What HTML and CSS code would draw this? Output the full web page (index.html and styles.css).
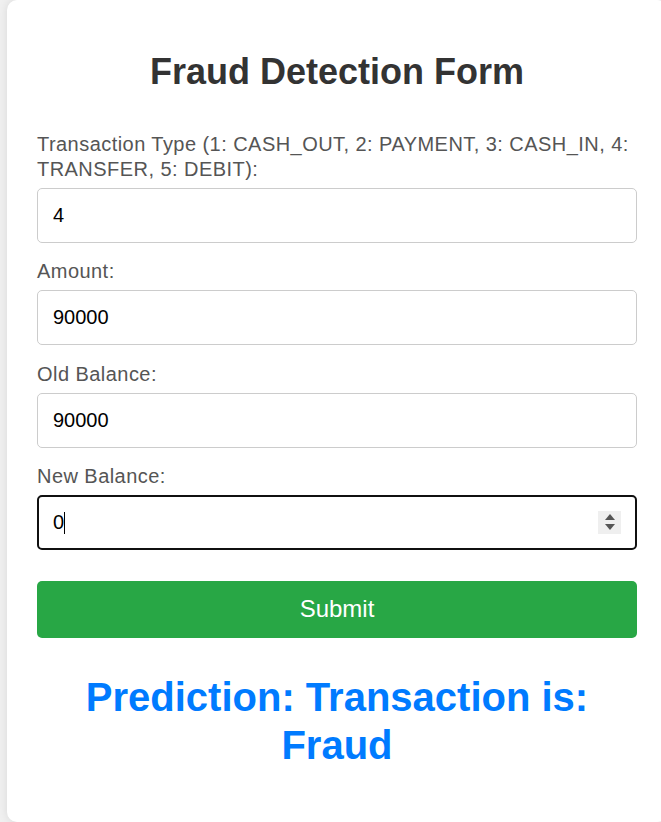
FILE: index.html
```html
<!DOCTYPE html>
<html lang="en">
<head>
<meta charset="utf-8">
<title>Fraud Detection Form</title>
<link rel="stylesheet" href="styles.css">
</head>
<body>
<div class="card">
  <h2 class="title">Fraud Detection Form</h2>
  <form class="form">
    <label class="label" for="type">Transaction Type (1: CASH_OUT, 2: PAYMENT, 3: CASH_IN, 4: TRANSFER, 5: DEBIT):</label>
    <input class="field" id="type" type="text" value="4">
    <label class="label" for="amount">Amount:</label>
    <input class="field" id="amount" type="text" value="90000">
    <label class="label" for="old">Old Balance:</label>
    <input class="field" id="old" type="text" value="90000">
    <label class="label" for="new">New Balance:</label>
    <div class="field-wrap">
      <input class="field focused" id="new" type="text" value="0">
      <span class="caret"></span>
      <span class="spinner">
        <svg width="12" height="18" viewBox="0 0 12 18"><path d="M6 1 L11 7 L1 7 Z" fill="#555"/><path d="M1 11 L11 11 L6 17 Z" fill="#555"/></svg>
      </span>
    </div>
    <button class="submit" type="button">Submit</button>
  </form>
  <h2 class="prediction">Prediction: Transaction is: Fraud</h2>
</div>
</body>
</html>
```

FILE: styles.css
```css
html, body {
  margin: 0;
  padding: 0;
}
body {
  background: #f0f0f0;
  font-family: "Liberation Sans", Arial, sans-serif;
  overflow: hidden;
  height: 822px;
}
.card {
  background: #fff;
  margin-left: 7px;
  width: 600px;
  height: 741px;
  padding: 51px 30px 30px;
  border-radius: 10px;
  box-shadow: 0 0 10px rgba(0, 0, 0, 0.1);
}
.title {
  margin: 0 0 40px;
  text-align: center;
  color: #333;
  font-size: 36px;
  line-height: 41px;
  font-weight: bold;
}
.form {
  display: flex;
  flex-direction: column;
}
.label {
  color: #555;
  font-size: 20px;
  line-height: 25px;
  letter-spacing: 0.45px;
  margin-bottom: 6px;
}
.field {
  box-sizing: border-box;
  width: 600px;
  height: 55px;
  padding: 0 15px;
  border: 1px solid #ccc;
  border-radius: 5px;
  font-family: "Liberation Sans", Arial, sans-serif;
  font-size: 20px;
  color: #000;
  margin: 0 0 16.3px;
  background: #fff;
}
.field-wrap {
  position: relative;
  width: 600px;
  height: 55px;
  margin-bottom: 31px;
}
.field-wrap .field {
  margin: 0;
}
.focused {
  border: 2px solid #101010;
  padding-left: 14px;
  outline: none;
}
.caret {
  position: absolute;
  left: 27px;
  top: 17px;
  width: 1px;
  height: 22px;
  background: #000;
}
.spinner {
  position: absolute;
  left: 561px;
  top: 16px;
  width: 23px;
  height: 23px;
  background: #efefef;
  display: flex;
  align-items: center;
  justify-content: center;
}
.submit {
  width: 600px;
  height: 57px;
  border: none;
  border-radius: 5px;
  background: #28a745;
  color: #fff;
  font-family: "Liberation Sans", Arial, sans-serif;
  font-size: 24px;
  cursor: pointer;
}
.prediction {
  margin: 35px 0 0;
  text-align: center;
  color: #007bff;
  font-size: 40px;
  line-height: 48px;
  font-weight: bold;
}
```
